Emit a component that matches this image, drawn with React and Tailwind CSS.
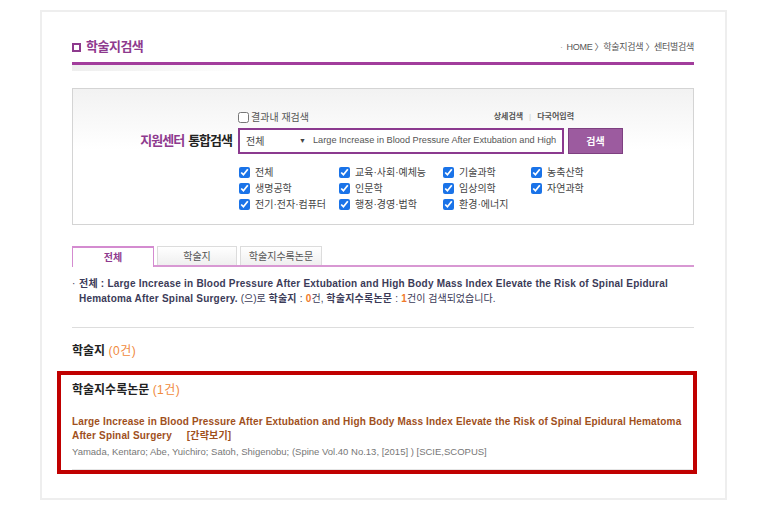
const FONT = { fontFamily: '"Liberation Sans", "Noto Sans CJK KR", sans-serif' };

const fields = [
  ["전체", "교육·사회·예체능", "기술과학", "농축산학"],
  ["생명공학", "인문학", "임상의학", "자연과학"],
  ["전기·전자·컴퓨터", "행정·경영·법학", "환경·에너지", null],
];

const QUERY =
  "Large Increase in Blood Pressure After Extubation and High Body Mass Index Elevate the Risk of Spinal Epidural Hematoma After Spinal Surgery";

function Check({ label }) {
  if (!label) return <div />;
  return (
    <label className="flex items-center gap-[5px] h-[16px]">
      <input type="checkbox" checked readOnly className="w-[11px] h-[11px] m-0 accent-[#1a73e8]" />
      <span className="text-[10px] text-[#444]">{label}</span>
    </label>
  );
}

function SearchBox() {
  return (
    <div className="mt-[23px] h-[137px] border border-[#d4d4d4] bg-gradient-to-b from-[#f2f2f2] to-white to-[45%]">
      <div className="grid grid-cols-[165px_1fr] pt-[21px]">
        <div />
        <div className="flex items-center h-[14px] w-[338px]">
          <label className="flex items-center gap-[2px]">
            <input type="checkbox" readOnly className="w-[11px] h-[11px] m-0" />
            <span className="text-[10px] text-[#555]">결과내 재검색</span>
          </label>
          <div className="ml-auto flex items-center gap-[6px] text-[8px] font-bold text-[#555] pr-[2px]">
            <span>상세검색</span>
            <span className="text-[#ccc] font-normal">|</span>
            <span>다국어입력</span>
          </div>
        </div>

        <div className="flex items-center justify-end pr-[6px] mt-[4px] h-[26px] text-[13px] font-bold tracking-[-1px]">
          <span className="text-[#8e3a8e]">지원센터</span>
          <span className="text-[#222] ml-[4px]">통합검색</span>
        </div>
        <div className="flex items-center mt-[4px] h-[26px]">
          <div className="w-[326px] h-[26px] border-2 border-[#8b3a8f] bg-white flex items-center pr-[4px]">
            <span className="shrink-0 w-[59px] pl-[6px] text-[10px] text-[#444] whitespace-nowrap">전체</span>
            <span className="shrink-0 text-[7px] text-[#444] w-[14px]">▼</span>
            <input
              type="text"
              readOnly
              value={QUERY}
              className="flex-1 min-w-0 p-0 bg-transparent outline-none text-[9.2px] text-[#555]"
            />
          </div>
          <button className="ml-[4px] w-[55px] h-[26px] bg-[#9c5b9f] border border-[#7e4081] text-white text-[10px] font-bold">
            검색
          </button>
        </div>

        <div />
        <div className="mt-[10px] grid grid-cols-[100px_104px_88px_100px] pl-[1px]">
          {fields.flat().map((f, i) => (
            <Check key={i} label={f} />
          ))}
        </div>
      </div>
    </div>
  );
}

function Tabs() {
  return (
    <div className="mt-[21px] flex items-end gap-[3px] h-[21px] border-b-2 border-[#d898d3]">
      <div className="w-[82px] h-[21px] -mb-[2px] border border-b-0 border-[#d48bd0] border-t-2 bg-white flex items-center justify-center text-[10px] font-bold text-[#8e3a8e]">
        전체
      </div>
      <div className="w-[80px] h-[19px] border border-b-0 border-[#dcdcdc] bg-gradient-to-b from-white to-[#efefef] flex items-center justify-center text-[10px] text-[#555]">
        학술지
      </div>
      <div className="w-[82px] h-[19px] border border-b-0 border-[#dcdcdc] bg-gradient-to-b from-white to-[#efefef] flex items-center justify-center text-[10px] text-[#555]">
        학술지수록논문
      </div>
    </div>
  );
}

function Summary() {
  const O = ({ children }) => <span className="text-[#f07a2a] font-bold">{children}</span>;
  return (
    <div className="mt-[9px] flex text-[10px] leading-[15px] text-[#3b3b58]">
      <span className="w-[7px]">·</span>
      <div className="whitespace-nowrap tracking-[0.22px]">
        <span className="font-bold">
          전체 : Large Increase in Blood Pressure After Extubation and High Body Mass Index Elevate the Risk of Spinal Epidural
        </span>
        <br />
        <span className="font-bold">Hematoma After Spinal Surgery.</span>
        <span className="tracking-normal"> (으)로 </span>
        <span className="font-bold">학술지</span>
        <span> : </span>
        <O>0</O>
        <span className="tracking-normal">건, </span>
        <span className="font-bold">학술지수록논문</span>
        <span> : </span>
        <O>1</O>
        <span className="tracking-normal">건이 검색되었습니다.</span>
      </div>
    </div>
  );
}

export default function App() {
  return (
    <div className="w-[766px] h-[518px] bg-white pt-[10px] pl-[40px]" style={FONT}>
      <div className="w-[687px] h-[490px] border-2 border-[#eeeeee]">
        <div className="pl-[30px] w-[652px]">
          <div className="h-[50px] flex items-end pb-[6px]">
            <span className="w-[9px] h-[9px] border-2 border-[#8e3a8e] mb-[4px] mr-[5px]" />
            <span className="text-[13px] font-bold text-[#8e3a8e] tracking-[-0.5px]">학술지검색</span>
            <span className="ml-auto mb-[2px] text-[9px] text-[#555] tracking-[-0.3px]">
              <span className="text-[#aaa] mr-[4px]">·</span>HOME 〉학술지검색 〉센터별검색
            </span>
          </div>
          <div className="h-[3px] bg-[#a23d9c]" />
          <div className="h-[6px] w-[180px] bg-gradient-to-r from-[#eeeeee] to-transparent" />

          <div className="-mt-[6px]">
            <SearchBox />
          </div>
          <Tabs />
          <Summary />

          <div className="mt-[21px] h-px bg-[#dddddd]" />

          <div className="mt-[15px] text-[12px] font-bold text-[#222] leading-[16px]">
            학술지 <span className="font-normal text-[#f08a3c] tracking-[0.5px]">(0건)</span>
          </div>

          <div className="mt-[12px] -ml-[15px] -mr-[3px] h-[103px] border-4 border-[#c00000] bg-white">
            <div className="ml-[11px] mr-[1px] h-[95px] border-b border-[#e4e4e4] pt-[7px]">
              <div className="text-[12px] font-bold text-[#222] leading-[16px]">
                학술지수록논문 <span className="font-normal text-[#f08a3c] tracking-[0.5px]">(1건)</span>
              </div>
              <div className="mt-[17px] text-[10px] font-bold text-[#a0501c] leading-[14px] tracking-[0.16px] whitespace-nowrap">
                Large Increase in Blood Pressure After Extubation and High Body Mass Index Elevate the Risk of Spinal Epidural Hematoma
                <br />
                After Spinal Surgery <span className="ml-[12px]">[간략보기]</span>
              </div>
              <div className="mt-[2px] text-[9.5px] text-[#777] leading-[14px] whitespace-nowrap">
                Yamada, Kentaro; Abe, Yuichiro; Satoh, Shigenobu; (Spine Vol.40 No.13, [2015] ) [SCIE,SCOPUS]
              </div>
            </div>
          </div>
        </div>
      </div>
    </div>
  );
}
